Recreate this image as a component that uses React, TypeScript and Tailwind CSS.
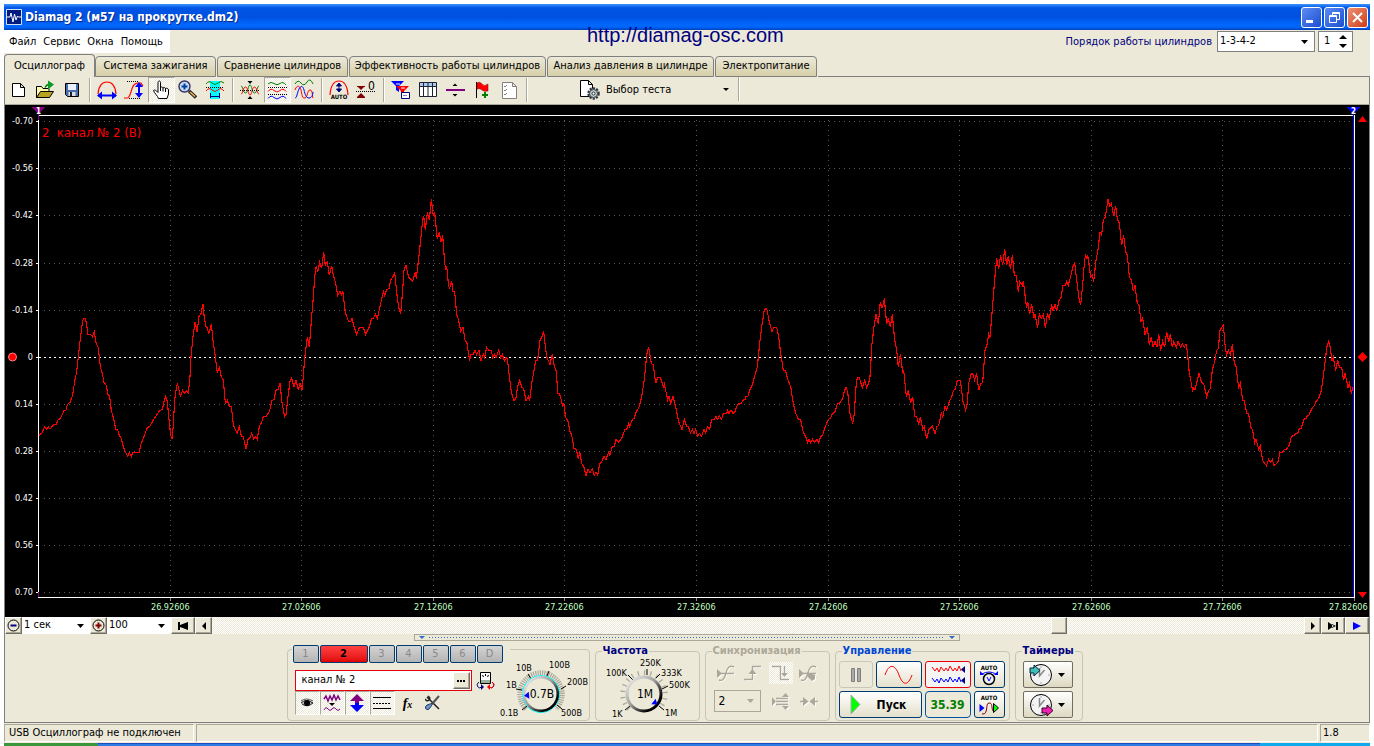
import { useState } from 'react';
import type { ReactNode } from 'react';
import clsx from 'clsx';

const tabs = [
  { name: 'Осциллограф', width: 'w-[91px]' },
  { name: 'Система зажигания', width: 'w-[121px]' },
  { name: 'Сравнение цилиндров', width: 'w-[131px]' },
  { name: 'Эффективность работы цилиндров', width: 'w-[197px]' },
  { name: 'Анализ давления в цилиндре', width: 'w-[167px]' },
  { name: 'Электропитание', width: 'w-[102px]' },
];

const levels = ['-0.70', '-0.56', '-0.42', '-0.28', '-0.14', '0', '0.14', '0.28', '0.42', '0.56', '0.70'];
const levelY = [121, 168, 215, 263, 310, 357, 404, 451, 498, 545, 592];
const times = ['26.92606', '27.02606', '27.12606', '27.22606', '27.32606', '27.42606', '27.52606', '27.62606', '27.72606', '27.82606'];
const timeX = [170, 301, 433, 564, 696, 828, 959, 1091, 1222, 1354];

const blocks = [
  {
    start: 0,
    points:
      '117,768 121,762 127,758 133,741 139,747 145,741 150,747 156,740 162,732 168,735 174,720 180,716 186,705 192,692 198,690 201,678 205,670 210,668 218,645 224,605 230,575 236,520 241,475 247,430 250,415 256,415 260,435 264,463 272,463 277,470 283,455 288,488 295,503 301,560 307,580 312,607 318,615 324,643 329,650 334,692 341,715 347,748 353,750 358,766 364,775 370,800 376,815 383,829 388,818 394,829 398,817 418,817 422,795 432,770 441,745 450,738 460,720 470,705 479,692 487,688 492,665 497,650 502,665 507,718 512,765 516,778 520,735 524,660 529,625 532,610 537,630 541,648 548,631 554,640 559,632 565,640 570,590 573,530 579,470 585,425 591,455 597,410 603,400 609,372 613,415 618,440 622,442 626,463 634,433 640,490 646,530 652,578 658,563 664,590 670,600 676,670 682,662 688,680 694,680 700,733 706,750 712,758 718,740 724,768 730,770 738,808 744,778 750,772 755,760 761,777 767,770 772,778 778,738 784,730 790,709 798,709 808,695 816,662 822,658 828,631 834,628 840,610 846,668 854,710 858,705 864,650 870,605 875,593 882,622 888,600 895,630 900,610 906,630 910,590 914,535 922,472 928,502 935,410 941,340 944,290 949,257 953,277 959,247 965,265 971,217 976,255 982,247 988,286 995,257 1001,290 1007,310 1013,346 1020,333 1025,345 1029,335 1034,385 1038,403 1046,425 1052,425 1056,415 1062,440 1070,464 1078,442 1090,442 1097,463 1108,440 1115,415 1120,415 1126,403 1132,415 1140,380 1150,335 1154,346 1160,330 1167,325 1173,298 1178,292 1184,277 1191,345 1196,383 1202,403 1208,330 1212,270 1218,256 1226,292 1238,304 1246,277 1249,296 1256,235 1262,180 1268,120 1271,108 1276,150 1282,97 1288,120 1294,58 1300,108 1304,97 1312,178 1318,157 1323,187 1328,166',
  },
  {
    start: 1320,
    points:
      '8,166 14,250 17,265 20,257 26,320 29,325 35,304 39,334 44,335 50,403 56,420 62,455 69,442 75,480 81,490 89,543 92,523 100,522 105,511 110,524 117,511 123,543 130,522 134,533 140,502 147,511 154,512 158,532 163,523 168,533 176,511 182,532 187,523 193,542 198,533 202,535 208,590 214,635 221,662 227,658 233,620 239,601 246,623 251,625 258,662 265,650 269,662 276,605 282,572 287,542 293,540 300,480 306,470 311,453 316,500 320,530 330,553 337,522 343,560 348,570 354,640 358,640 364,660 368,680 371,670 377,713 383,720 390,755 395,765 402,805 409,808 415,838 419,815 425,850 432,862 438,887 444,868 450,878 457,867 463,886 468,877 473,886 479,852 485,845 492,829 498,838 506,817 509,829 516,802 523,798 528,778 535,787 545,775 555,748 560,748 566,730 569,740 577,718 582,716 590,692 596,685 604,655 613,600 620,525 626,502 634,550 640,555 647,610 653,592 661,592 670,620 673,612 683,660 687,650 692,670 699,650 708,685 716,725 726,748 733,718 740,740 745,739 751,760 757,748 762,760 767,748 773,768 778,760 785,768 792,748 797,760 802,740 809,748 815,718 822,718 828,710 833,718 838,708 845,718 850,700 860,700 863,691 867,700 873,690 879,700 885,694 893,673 903,670 910,660 915,658 918,649 924,648 930,628 938,612 945,585 952,560 958,500 965,440 973,390 980,385 988,425 996,455 1001,442 1010,442 1016,470 1022,520 1030,570 1037,573 1044,600 1052,620 1060,670 1067,700 1075,717 1082,720 1090,757 1097,770 1103,788 1107,778 1112,788 1118,778 1124,788 1131,778 1136,788 1142,770 1148,766 1155,742 1165,718 1171,715 1178,700 1184,698 1192,672 1199,669 1208,655 1214,630 1218,622 1223,635 1230,700 1238,731 1243,700 1248,620 1252,592 1258,593 1267,623 1274,601 1280,622 1286,610 1290,590 1296,490 1302,440 1308,403 1315,433 1321,365 1327,385 1333,355 1340,433 1345,415 1351,442 1357,403 1364,480 1370,510 1375,562 1381,523',
  },
  {
    start: 2700,
    points:
      '1,523 4,540 8,580 11,570 19,650 25,631 32,670 38,650 44,708 50,710 56,731 61,710 68,748 73,740 80,778 87,748 97,738 105,760 111,740 116,737 124,700 128,710 135,680 140,690 148,665 155,650 160,632 166,627 172,601 181,601 189,665 197,691 202,670 206,610 214,580 218,580 224,601 230,580 236,631 242,612 248,608 255,510 261,495 266,462 270,472 276,400 284,300 290,235 296,266 302,226 308,256 314,208 320,256 325,227 331,266 337,226 343,285 349,288 355,335 359,304 367,316 370,304 380,385 383,365 389,403 395,373 402,415 405,403 413,443 418,403 424,415 430,403 436,443 442,403 448,415 455,373 459,394 465,373 470,394 477,362 483,352 489,316 496,316 500,304 505,316 512,290 518,262 524,247 530,300 537,355 542,375 548,315 554,237 557,227 561,237 563,226 572,290 577,286 581,305 588,240 594,210 600,157 605,165 610,120 616,112 624,58 629,78 634,70 641,108 647,79 652,118 658,130 665,196 671,166 677,215 682,225 688,290 694,300 700,334 705,316 712,370 717,375 723,425 728,415 735,464 742,442 748,494 754,472 759,502 765,484 771,502 776,462 782,512 788,484 794,502 800,455 806,485 811,463 817,502 821,485 829,502 834,484 842,502 847,492 853,502 858,493 862,515 868,580 878,632 881,625 885,630 897,580 904,605 912,615 920,650 926,632 931,625 937,570 943,548 950,512 955,505 960,450 967,440 970,433 976,505 980,524 985,511 991,524 997,493 1003,550 1008,560 1016,622 1021,610 1028,660 1033,662 1040,700 1046,702 1052,740 1058,750 1064,788 1068,778 1076,808 1081,798 1088,842 1099,857 1106,838 1111,848 1117,838 1122,857 1128,852 1134,845 1140,817 1148,816 1153,808 1160,807 1168,795 1174,770 1182,766 1188,760 1193,760 1197,748 1203,745 1212,718 1218,715 1221,709 1227,705 1236,685 1242,678 1248,665 1256,655 1263,635 1270,590 1277,530 1281,500 1286,484 1290,500 1296,542 1300,532 1307,572 1313,541 1318,561 1325,562 1331,601 1335,580 1344,622 1348,610 1354,641 1358,622',
  },
];

const checker =
  'bg-[conic-gradient(#fff_25%,#ece9d8_0_50%,#fff_0_75%,#ece9d8_0)] bg-[length:2px_2px]';
const raised =
  'border border-t-white border-l-white border-r-[#716f64] border-b-[#716f64] shadow-[inset_-1px_-1px_0_#aca899] bg-[#ece9d8]';
const sunken = 'border border-t-[#aca899] border-l-[#aca899] border-r-white border-b-white';

/* ---------- Toolbar ---------- */

const toolIcons: Record<string, ReactNode> = {
  new: <path d="M6.500 5.500h8l4 4v9h-12zM14.500 5.500v4h4" fill="#fff" stroke="#000" />,
  open: (
    <>
      <path d="M3.500 19.500v-11h5l1.500 2h6v9z" fill="#ffffb0" stroke="#000" />
      <path d="M3.500 19.500l4-6h13l-4 6z" fill="#b8a020" stroke="#000" />
      <path d="M12 9.500q2-3.500 4-3" fill="none" stroke="#008000" strokeWidth="1.500" />
      <path d="M15 2.500v9l6-5z" fill="#0a9a2a" />
    </>
  ),
  save: (
    <>
      <path d="M5.500 5.500h13v13h-11l-2-2z" fill="#4a6ea9" stroke="#000" />
      <path d="M8 6h8v6H8z" fill="#e8f0ff" />
      <path d="M8.500 14h7v4h-7z" fill="#ddd" />
      <path d="M10 14h2v4h-2z" fill="#123" />
    </>
  ),
  period: (
    <>
      <path d="M3 16q1-12 9-12t9 12" fill="none" stroke="red" strokeWidth="1.200" />
      <path d="M3 17.500h18" stroke="#00f" strokeWidth="2" />
      <path d="M7 13.500v8l-5-4zM17 13.500v8l5-4z" fill="#00f" />
    </>
  ),
  amplitude: (
    <>
      <path d="M2 20h3c5 0 3-15 11-15h3l2 3" fill="none" stroke="red" strokeWidth="1.200" />
      <path d="M5 3.500h12M7 20.500h12" stroke="#000" strokeDasharray="1 1" />
      <path d="M17 6v12" stroke="#00f" strokeWidth="2" />
      <path d="M13 9h8l-4-5zM13 15h8l-4 5z" fill="#00f" />
    </>
  ),
  hand: (
    <path
      d="M9.500 20.500c-1-3-4-5-5-8 1-1 2.500-.5 4.500 2V4.500c0-2 2.500-2 2.500 0V10c0-1.500 2.500-1.500 2.500.5 0-1.500 2.500-1.500 2.500.5 0-1.300 3-1 3 1v4l-1.500 4.500zM11.500 9v4M14 10.500v3M16.500 11v3"
      fill="#fff"
      stroke="#000"
    />
  ),
  zoom: (
    <>
      <circle cx="8.500" cy="8.500" r="5.500" fill="#c8dcf4" stroke="#336" strokeWidth="1.400" />
      <path d="M8.500 5.500v6M5.500 8.500h6" stroke="#0040a0" strokeWidth="2" />
      <path d="M13 13l7 6.500" stroke="#222" strokeWidth="3.500" />
      <path d="M14 14l5 4.500" stroke="#f0b850" strokeWidth="1.500" />
    </>
  ),
  cursor: (
    <>
      <path d="M7 3h10v18H7z" fill="#0ff" />
      <path d="M3 6q3-4 6-1t6 0 6 0" fill="none" stroke="#008000" />
      <path d="M3 13q3-4 6-1t6 0 6 1" fill="none" stroke="red" />
      <path d="M3 9.500h18" stroke="#000" strokeDasharray="1 1" />
      <path d="M7.500 15v5M16.500 15v5M8 18.500h8" stroke="#000080" />
    </>
  ),
  cross: (
    <>
      <path d="M3 8C5 8 5 15 7.500 15S10 7 12 7s2 8 4.500 8S19 8 21 8" fill="none" stroke="#008000" />
      <path d="M3 16c2 0 2-7 4.500-7S10 17 12 17s2-8 4.500-8S19 16 21 16" fill="none" stroke="red" />
      <path d="M2 12.500h20" stroke="#000" strokeDasharray="1 1" />
      <path d="M9.500 3h5L12 6zM9.500 21h5L12 18z" fill="#000" />
    </>
  ),
  split: (
    <>
      <path d="M3 6q3-3 6-.5t6 0 6 1.500" fill="none" stroke="#008000" />
      <path d="M3 13.500q3-4 6-1t6 0 6 1" fill="none" stroke="red" />
      <path d="M3 20.500q3-4 6-1t6 0 6 1" fill="none" stroke="#00f" />
      <path d="M3 9.500h19M3 16.500h19" stroke="#000" strokeDasharray="1 1" />
    </>
  ),
  overlay: (
    <>
      <path d="M3 6q3-5 6-1t6-1 6 2" fill="none" stroke="#008000" />
      <path d="M3 12c2-6 5-4 6 0s1 9 4 8 2-8 5-8 2 6 3 8" fill="none" stroke="red" />
      <path d="M3 20c2 0 2-5 4-9s4-3 5 1 2 8 5 8 4-4 4-6" fill="none" stroke="#00f" />
    </>
  ),
  auto: (
    <>
      <path d="M3 17q1-14 9-14t9 14" fill="none" stroke="red" strokeWidth="1.200" />
      <path d="M12 5v8M9.500 8L12 5l2.500 3zM9.500 11l2.500 3 2.500-3z" fill="#000080" stroke="#000080" />
      <text x="12" y="21" fontSize="6" fontWeight="bold" textAnchor="middle">AUTO</text>
    </>
  ),
  zero: (
    <>
      <path d="M3 8h8l-4 4zM3 19h8l-4-4z" fill="#800000" />
      <path d="M3 8.500h8M3 19.500h8" stroke="#800000" />
      <path d="M2 13.500h20" stroke="#000" strokeDasharray="1 1" />
      <text x="14" y="12" fontSize="12">0</text>
    </>
  ),
  filter: (
    <>
      <path d="M2 3h13l-5 5v6l-3-2V8z" fill="#00f" />
      <path d="M7 8h13l-5 5v6l-3-2v-4z" fill="red" />
      <path d="M7 6h4M12 10h4" stroke="#fff" />
      <path d="M12.500 14.500h8v6h-8z" fill="#fff" stroke="#000080" />
      <path d="M14.500 17.500h4" stroke="#000080" strokeDasharray="1 1" />
    </>
  ),
  table: (
    <>
      <path d="M3.500 4.500h17v14h-17z" fill="#fff" stroke="#223" />
      <path d="M4 5h16v3H4z" fill="#a8c8f0" />
      <path d="M3 8.500h18M7.500 5v13M12 5v13M16.500 5v13" stroke="#223" />
    </>
  ),
  line: (
    <>
      <path d="M3 12h19" stroke="#800080" strokeWidth="2" />
      <path d="M9.500 8h5L12 5.500zM9.500 16h5L12 18.500z" fill="#000" />
    </>
  ),
  flag: (
    <>
      <path d="M6.500 4v16" stroke="#000" />
      <path d="M7 5q3-2 5 1t6 0v7q-4 1-6-1t-5-1z" fill="red" stroke="#800000" strokeWidth=".5" />
      <path d="M12 17h6M15 14v6" stroke="#008000" strokeWidth="2" />
    </>
  ),
  list: (
    <>
      <path d="M5.500 4.500h10l4 4v12h-14zM15.500 4.500v4h4" fill="#fff" stroke="#808080" />
      <path d="M7 8l1 1 2-2M7 12l1 1 2-2M7 16l1 1 2-2" fill="none" stroke="#808080" />
    </>
  ),
};

const toolGroups = [
  [['new', 'Новый'], ['open', 'Открыть'], ['save', 'Сохранить']],
  [['period', 'Период'], ['amplitude', 'Амплитуда'], ['hand', 'Рука'], ['zoom', 'Масштаб'], ['cursor', 'Интервал']],
  [['cross', 'Совместить'], ['split', 'Разделить'], ['overlay', 'Наложить']],
  [['auto', 'Авто'], ['zero', 'Ноль']],
  [['filter', 'Фильтр'], ['table', 'Таблица'], ['line', 'Линия'], ['flag', 'Метка'], ['list', 'Список']],
];

function Separator() {
  return (
    <div className="flex w-2 justify-center">
      <div className="h-6 w-[2px] border-l border-[#aca899] bg-white" />
    </div>
  );
}

function Toolbar() {
  const [pressed, setPressed] = useState(['hand', 'split']);
  const toggle = (id: string) =>
    setPressed(pressed.includes(id) ? pressed.filter((p) => p !== id) : [...pressed, id]);

  return (
    <div className="flex h-[27px] shrink-0 items-start border-x border-[#808080] text-[11px]">
      {toolGroups.map((group, i) => (
        <div key={i} className="flex items-center">
          {group.map(([id, label]) => (
            <button
              key={id}
              aria-label={label}
              onClick={() => toggle(id)}
              className={clsx(
                'flex h-[26px] w-[27px] items-center border',
                pressed.includes(id) ? [checker, sunken] : 'border-transparent'
              )}
            >
              <svg viewBox="0 0 24 24" className="h-6 w-6 shrink-0">{toolIcons[id]}</svg>
            </button>
          ))}
          <Separator />
        </div>
      ))}
      <button className="ml-[47px] flex h-[26px] w-[157px] items-center gap-1">
        <svg viewBox="0 0 24 22" className="h-[22px] w-6">
          <path d="M2.500 1.500h8l4 4v12h-12zM10.500 1.500v4h4" fill="#fff" stroke="#000" />
          <circle cx="15.500" cy="14.500" r="5" fill="#a8c8b8" stroke="#334" strokeWidth="2.500" strokeDasharray="2 1.200" />
          <circle cx="15.500" cy="14.500" r="4" fill="#b8d0c4" stroke="#445" />
          <circle cx="15.500" cy="14.500" r="1.500" fill="#fff" stroke="#334" />
        </svg>
        <span className="flex-1 text-left">Выбор теста</span>
        <svg viewBox="0 0 6 4" className="mr-[6px] h-1 w-[6px]"><path d="M0 0h6L3 3z" /></svg>
      </button>
      <Separator />
    </div>
  );
}

/* ---------- Chart ---------- */

function Chart() {
  return (
    <svg
      viewBox="5 105 1364 512"
      className="block min-h-0 w-full flex-1 bg-black"
      shapeRendering="crispEdges"
      role="img"
      aria-label="Осциллограмма"
    >
      {levelY.map((y, i) => (
        <g key={y}>
          {i !== 5 && <path d={`M44 ${y + 0.5}H1352`} stroke="#585858" strokeDasharray="1 4" />}
          <path d={`M36 ${y + 0.5}h3`} stroke="#fff" />
          <text x="33" y={y + 3} fontSize="9" fill="#fff" textAnchor="end">{levels[i]}</text>
        </g>
      ))}
      {timeX.map((x, i) => (
        <g key={x}>
          {i < 9 && <path d={`M${x + 0.5} 120V592`} stroke="#585858" strokeDasharray="1 4" />}
          <path d={`M${x + 0.5} 598v3`} stroke="#888" />
          <text x={Math.min(x - 19, 1329)} y="610" fontSize="9" fill="#c0ffc0">{times[i]}</text>
        </g>
      ))}
      <path d="M39 357.500H1354" stroke="#fff" strokeDasharray="2 3" />
      <path d="M1354.500 115.500H38.500V597.500H1354.500z" fill="none" stroke="#fff" />
      <path d="M1353.500 111V597" stroke="#00f" />
      <path d="M38.500 112v8M38.500 592v5" stroke="#800080" />
      <text x="42" y="137" fontSize="13" fill="red" xmlSpace="preserve">2  канал № 2 (В)</text>
      {blocks.map((block) => (
        <g key={block.start} transform={`translate(${block.start / 3} 180) scale(${1 / 3})`}>
          <polyline points={block.points} fill="none" stroke="red" strokeWidth="3.400" />
        </g>
      ))}
      <path d="M31 107h15l-7.500 7z" fill="#800080" />
      <text x="38.500" y="114" fontSize="8" fontWeight="bold" fill="#fff" textAnchor="middle">1</text>
      <path d="M1346 107h15l-7.500 7z" fill="#00f" />
      <text x="1353.500" y="114" fontSize="8" fontWeight="bold" fill="#fff" textAnchor="middle">2</text>
      <g shapeRendering="auto">
        <circle cx="12.500" cy="357" r="4" fill="red" stroke="#ff8080" />
        <path d="M1358 122h9l-4.500-6zM1358 592h9l-4.500 6zM1362.500 352l5 5-5 5-5-5z" fill="red" />
      </g>
    </svg>
  );
}

/* ---------- Scroll row ---------- */

function ArrowSelect({ label, value, className }: { label: string; value: string; className: string }) {
  return (
    <div className={clsx('relative bg-white', className)}>
      <select aria-label={label} className="h-full w-full appearance-none bg-transparent pl-[2px] outline-none">
        <option>{value}</option>
      </select>
      <svg viewBox="0 0 7 4" className="pointer-events-none absolute top-1/2 right-[6px] -mt-[2px] h-1 w-[7px]">
        <path d="M0 0h7L3.500 4z" />
      </svg>
    </div>
  );
}

function ScrollRow() {
  return (
    <div className="flex h-[17px] shrink-0 text-[11px]">
      <button aria-label="Уменьшить" className={clsx('flex w-[17px] items-center justify-center', raised)}>
        <svg viewBox="0 0 13 13" className="h-[13px] w-[13px] shrink-0">
          <circle cx="6.500" cy="6.500" r="5.500" fill="none" stroke="#000" />
          <path d="M3.500 6.500h6" stroke="#000080" strokeWidth="2" />
        </svg>
      </button>
      <ArrowSelect label="Развёртка" value="1 сек" className="w-[68px]" />
      <button aria-label="Увеличить" className={clsx('flex w-[17px] items-center justify-center', raised)}>
        <svg viewBox="0 0 13 13" className="h-[13px] w-[13px] shrink-0">
          <circle cx="6.500" cy="6.500" r="5.500" fill="none" stroke="#000" />
          <path d="M3.500 6.500h6M6.500 3.500v6" stroke="#800000" strokeWidth="2" />
        </svg>
      </button>
      <ArrowSelect label="Масштаб" value="100" className="w-16" />
      <button aria-label="В начало" className={clsx('flex w-6 items-center justify-center', raised)}>
        <svg viewBox="0 0 10 8" className="h-2 w-[10px]"><path d="M0 0h2v3l8-3v8L2 5v3H0z" /></svg>
      </button>
      <button aria-label="Назад" className={clsx('flex w-[17px] items-center justify-center', raised)}>
        <svg viewBox="0 0 4 8" className="h-2 w-1"><path d="M4 0v8L0 4z" /></svg>
      </button>
      <div className={clsx('flex flex-1 justify-end', checker)}>
        <div className={clsx('mr-[237px] w-4', raised)} />
      </div>
      <button aria-label="Вперёд" className={clsx('flex w-[17px] items-center justify-center', raised)}>
        <svg viewBox="0 0 4 8" className="h-2 w-1"><path d="M0 0v8l4-4z" /></svg>
      </button>
      <button aria-label="В конец" className={clsx('flex w-6 items-center justify-center', raised)}>
        <svg viewBox="0 0 10 8" className="h-2 w-[10px]"><path d="M0 0v8l6-4zM8 0h2v8H8zM4 2l4 2-4 2z" /></svg>
      </button>
      <button aria-label="Пуск прокрутки" className={clsx('flex w-6 items-center justify-center', raised)}>
        <svg viewBox="0 0 8 8" className="h-2 w-2"><path d="M0 0v8l8-4z" fill="#00f" /></svg>
      </button>
    </div>
  );
}

/* ---------- Bottom panels ---------- */

interface Dial {
  cx: number;
  cy: number;
  value: string;
  ring: string;
  angle: number;
  viewBox: string;
  labels: [number, number, string][];
  marks: string;
  ticks: string;
  id: string;
}

function Knob({ cx, cy, value, ring, angle, viewBox, labels, marks, ticks, id }: Dial) {
  return (
    <svg viewBox={viewBox} className="h-[66px] w-[92px]" role="img" aria-label={value}>
      <defs>
        <linearGradient id={id} x1="0" y1="0" x2="1" y2="1">
          <stop offset="0" stopColor="#f4f4f4" />
          <stop offset=".45" stopColor="#a0a0a0" />
          <stop offset=".8" stopColor="#000" />
        </linearGradient>
      </defs>
      <path
        d={`M${cx - 15} ${cy + 15}A21.200 21.200 0 1 1 ${cx + 15} ${cy + 15}`}
        fill="none"
        stroke="#aca899"
        strokeWidth="5"
        strokeDasharray={ticks}
      />
      <path d={marks} stroke="#000" />
      <circle cx={cx} cy={cy} r="17" fill="#ece9d8" stroke={`url(#${id})`} strokeWidth="3" />
      <circle cx={cx} cy={cy} r="18.500" fill="none" stroke={ring} strokeDasharray="5 1" />
      <path d="M-17 0l5-3.500v7z" fill="#00f" transform={`translate(${cx} ${cy}) rotate(${angle})`} />
      <text x={cx + 1} y={cy + 4} fontSize="12" textAnchor="middle">{value}</text>
      {labels.map(([x, y, text]) => (
        <text key={text} x={x} y={y} fontSize="9">{text}</text>
      ))}
    </svg>
  );
}

function Group({ title, color, className, children }: { title: string; color: string; className: string; children: ReactNode }) {
  return (
    <fieldset className={clsx('h-[78px] min-w-0 rounded-[4px] border border-[#c8c5b4]', className)}>
      <legend className={clsx('ml-[6px] h-4 px-px text-[11px] leading-4 font-bold', color)}>{title}</legend>
      {children}
    </fieldset>
  );
}

function ChannelPanel() {
  const [channel, setChannel] = useState('2');
  const [name, setName] = useState('канал № 2');

  return (
    <div className="mt-[6px] flex h-[72px] w-[303px] rounded-[4px] border border-[#c8c5b4]">
      <div className="flex flex-col pl-1">
        <div className="-mt-[5px] flex h-[19px] gap-px bg-[#ece9d8] pr-[7px] pl-px">
          {['1', '2', '3', '4', '5', '6', 'D'].map((c) => (
            <button
              key={c}
              onClick={() => setChannel(c)}
              className={clsx(
                'h-[18px] rounded-[2px] border border-[#003c74] text-[11px] leading-4',
                c === channel
                  ? 'w-12 bg-linear-to-b from-[#ff4040] to-[#e00000] font-bold text-black'
                  : 'w-[26px] bg-linear-to-b from-[#d4d4d4] to-[#b4b4b4] text-[#888]'
              )}
            >
              {c}
            </button>
          ))}
        </div>
        <div className="mt-[6px] ml-[3px] flex items-center gap-1">
          <div className="flex h-[21px] w-[177px] border border-red-600 bg-white p-px">
            <input
              aria-label="Имя канала"
              value={name}
              onChange={(e) => setName(e.target.value)}
              className="min-w-0 flex-1 pl-[5px] text-[11px] outline-none"
            />
            <button aria-label="Выбрать" className={clsx('flex w-[17px] items-center justify-center', raised)}>
              <svg viewBox="0 0 8 2" className="h-[2px] w-2"><path d="M0 0h2v2H0zM3 0h2v2H3zM6 0h2v2H6z" /></svg>
            </button>
          </div>
          <button aria-label="Прибор">
            <svg viewBox="0 0 20 20" className="h-5 w-5">
              <path d="M4.500 1.500h10v11h-10z" fill="#fff" stroke="#000" />
              <path d="M5 9h9v3H5z" fill="#9ab09a" />
              <path d="M6.500 4l1 2M12.500 4l-1 2M9.500 3v2" stroke="#000" />
              <path d="M3 11q-3 2-1.500 4.500T6 16M16 11q3 2 1.500 4.500T13 16" fill="none" stroke="#000080" />
              <path d="M16 11q3 2 1.500 4.500T13 16" fill="none" stroke="red" />
              <path d="M5 13v6l3-3z" fill="#000080" />
              <path d="M14 13v6l-3-3z" fill="red" />
            </svg>
          </button>
        </div>
        <div className="ml-[3px] flex h-6 items-center">
          <button aria-label="Показать" className={clsx('flex h-6 w-[25px] items-center justify-center', checker, sunken)}>
            <svg viewBox="0 0 16 12" className="h-3 w-4">
              <path d="M2 6q5-5 12 0-6 5-11 1" fill="#bbb" stroke="#222" />
              <circle cx="8" cy="6" r="3" />
              <path d="M2 4q5-4 12 0" stroke="#555" fill="none" />
            </svg>
          </button>
          <button aria-label="Сглаживание" className={clsx('flex h-6 w-[25px] items-center justify-center', checker, sunken)}>
            <svg viewBox="0 0 18 18" className="h-[18px] w-[18px] shrink-0">
              <path d="M1 5l2-3 2 5 2-5 2 4 2-5 2 5 2-4 2 4" fill="none" stroke="#800080" strokeWidth="1.500" />
              <path d="M6 9h6l-3 3z" />
              <path d="M1 16q2-4 4-1t4 0 4 0 4 0" fill="none" stroke="#800080" />
            </svg>
          </button>
          <button aria-label="Смещение" className={clsx('flex h-6 w-[25px] items-center justify-center', checker, sunken)}>
            <svg viewBox="0 0 16 18" className="h-[18px] w-4 shrink-0">
              <path d="M8 0l7 7h-5v2H6V7H1z" fill="#800080" />
              <path d="M8 18l7-7h-5V9H6v2H1z" fill="#00f" />
            </svg>
          </button>
          <button aria-label="Уровень" className={clsx('flex h-6 w-[25px] items-center justify-center', checker, sunken)}>
            <svg viewBox="0 0 18 14" className="h-[14px] w-[18px] shrink-0">
              <path d="M0 1.500h18M0 12.500h18" stroke="#000" />
              <path d="M0 7.500h18" stroke="#000" strokeDasharray="2 1" />
            </svg>
          </button>
          <button className="h-6 w-[26px] font-['Liberation_Serif',serif] text-[14px] font-bold italic">
            f<span className="text-[10px]">x</span>
          </button>
          <button aria-label="Настройки" className="flex h-6 w-6 items-center justify-center">
            <svg viewBox="0 0 16 16" className="h-4 w-4">
              <path d="M2 2l12 12M3 1q3 2 1 4t-4-1" fill="none" stroke="#222" strokeWidth="1.500" />
              <path d="M14 1l-7 8" stroke="#555" strokeWidth="2" />
              <path d="M8 8l-3 5q-2 3-4 1t1-4z" fill="#6a94c8" stroke="#246" />
            </svg>
          </button>
        </div>
      </div>
      <div className="-ml-3 pt-[3px]">
        <Knob
          id="volt"
          cx={541}
          cy={694}
          value="0.7В"
          ring="#0ff"
          ticks="1.200 1"
          angle={-6}
          viewBox="498 653 92 66"
          labels={[[500, 716, '0.1В'], [506, 688, '1В'], [516, 671, '10В'], [549, 668, '100В'], [567, 685, '200В'], [561, 716, '500В']]}
          marks="M522 710l5-4M516 689l6 1M528 674l3 5M549 671l-2 5M566 686l-5 3M562 709l-5-4"
        />
      </div>
    </div>
  );
}

const xpButton =
  'flex h-[27px] items-center justify-center rounded-[3px] border border-[#003c74] bg-linear-to-b from-white to-[#e4e0cc]';

function Miniwave({ color }: { color: string }) {
  return (
    <svg viewBox="0 0 34 9" className="h-[9px] w-[34px]">
      <path d="M1 2l3 4 2-3 2 4 2-5 3 4 2-3 2 3 2-5 3 5 2-3 2 3 2-5 2 5" fill="none" stroke={color} />
      <path d="M34 1v7l-4-3.500z" fill="#000080" />
    </svg>
  );
}

function Clock({ out }: { out?: boolean }) {
  return (
    <svg viewBox="0 0 26 26" className="h-[26px] w-[26px] shrink-0">
      <circle cx="13" cy="13" r="10.500" fill="#f4f4f4" stroke="#000" />
      <path d="M11.500 6v8l5-6" fill="none" stroke="#888" strokeWidth="1.500" />
      <path d="M13 4v2M13 20v2M4 13h2M20 13h2" stroke="#aaa" />
      {out ? (
        <path d="M14 16h5v-3l6 5.500-6 5.500v-3h-5z" fill="#f020b0" stroke="#300020" />
      ) : (
        <path d="M2 6h4V3l6 5.500L6 14v-3H2z" fill="#40c0b0" stroke="#024" />
      )}
    </svg>
  );
}

function SyncIcon({ d, tri, label, on }: { d: string; tri: string; label: string; on?: boolean }) {
  return (
    <button disabled aria-label={label} className={clsx('flex h-[22px] w-6 items-center justify-center', on && checker)}>
      <svg viewBox="0 0 20 18" className="h-[18px] w-5 shrink-0">
        <g transform="translate(1 1)">
          <path d={d} fill="none" stroke="#fff" />
          <path d={tri} fill="#fff" />
        </g>
        <path d={d} fill="none" stroke="#aca899" strokeWidth="1.400" />
        <path d={tri} fill="#aca899" />
      </svg>
    </button>
  );
}

function BottomPanel() {
  return (
    <div className="flex h-[82px] shrink-0 items-start justify-center gap-[5px] border-x border-b border-[#808080] pt-[2px] pr-[5px]">
      <ChannelPanel />

      <Group title="Частота" color="text-[#000080]" className="w-[105px]">
        <div className="-mt-1 flex justify-center">
          <Knob
            id="freq"
            cx={645}
            cy={694}
            value="1M"
            ring="none"
            ticks="1.200 5"
            angle={218}
            viewBox="602 655 92 66"
            labels={[[613, 717, '1K'], [607, 676, '100K'], [641, 666, '250K'], [662, 676, '333K'], [670, 688, '500K'], [666, 716, '1M']]}
            marks="M626 710l5-4M629 675l5 5M648 669v6M661 674l-4 4M669 686l-6 3M665 710l-5-4"
          />
        </div>
      </Group>

      <Group title="Синхронизация" color="text-[#aca899]" className="w-[125px]">
        <div className="flex justify-between px-2 pt-[3px]">
          <SyncIcon label="Уровень" d="M3 16q5 2 7-7t8-6M5 9.500h13" tri="M1 5v9l5-4.500z" />
          <SyncIcon label="Фронт" d="M1 15.500h8.500v-13H18" tri="M5.500 10h8l-4-5z" />
          <SyncIcon label="Спад" on d="M1 2.500h8.500v13H18M13.500 2v9" tri="M10 9h7l-3.500 4z" />
          <SyncIcon label="Вручную" d="M3 16q5 2 7-7t8-6M5 9.500h13" tri="M1 5v9l5-4.500zM9 8l8 3v4l-3 2-4-4z" />
        </div>
        <div className="flex items-center justify-between px-2 pt-[6px]">
          <div className="relative">
            <select
              disabled
              aria-label="Канал синхронизации"
              className="block h-[22px] w-[47px] appearance-none border border-[#aca899] pl-1 text-[12px] text-black opacity-100"
            >
              <option>2</option>
            </select>
            <svg viewBox="0 0 7 4" className="pointer-events-none absolute top-[9px] right-[7px] h-1 w-[7px]">
              <path d="M0 0h7L3.500 4z" fill="#aca899" />
            </svg>
          </div>
          <div className="flex gap-1">
            <SyncIcon label="Гистерезис" d="M5 6.500h12M5 9.500h12M5 12.500h12" tri="M1 5v9l4-4.500zM11 5h7l-3.500-4zM11 14h7l-3.500 4z" />
            <SyncIcon label="Сжать" d="M1 9.500h5M14 9.500h5" tri="M4 5v9l5.500-4.500zM16 5v9l-5.500-4.500z" />
          </div>
        </div>
      </Group>

      <Group title="Управление" color="text-[#0046d5]" className="w-[175px]">
        <div className="flex gap-[3px] pt-[2px] pl-[3px]">
          <div className="flex flex-col gap-[3px]">
            <div className="flex gap-[3px]">
              <button disabled aria-label="Пауза" className="flex h-[27px] w-[34px] items-center justify-center rounded-[3px] border border-[#c9c7ba]">
                <svg viewBox="0 0 12 16" className="h-4 w-3">
                  <path d="M1.500 1.500h3v13h-3zM7.500 1.500h3v13h-3z" fill="#aaa" stroke="#808080" />
                </svg>
              </button>
              <button aria-label="Сигнал" className={clsx('w-[46px]', xpButton)}>
                <svg viewBox="0 0 30 20" className="h-5 w-[30px]">
                  <path d="M1 10C5-2 11-1 15 10s9 11 13 0" fill="none" stroke="red" />
                </svg>
              </button>
            </div>
            <button className={clsx('w-[83px] gap-4 pr-1 text-[12px] font-bold', xpButton)}>
              <svg viewBox="0 0 11 20" className="h-5 w-[11px]">
                <path d="M1 0v19l9-9.500z" fill="#0f0" stroke="#aaa" />
              </svg>
              Пуск
            </button>
          </div>
          <div className="flex flex-col gap-[3px]">
            <button aria-label="Запись" className="flex h-[27px] w-[46px] flex-col items-center justify-center gap-[2px] rounded-[3px] border border-red-600 bg-[#f4f4f4]">
              <Miniwave color="red" />
              <Miniwave color="#00f" />
            </button>
            <output className="flex h-[27px] w-[46px] items-center justify-center rounded-[4px] border border-[#0054a6] text-[12px] font-bold text-[#008000]">
              35.39
            </output>
          </div>
          <div className="flex flex-col gap-[3px]">
            <button aria-label="Авто напряжение" className={clsx('w-[31px]', xpButton)}>
              <svg viewBox="0 0 22 24" className="h-6 w-[22px] shrink-0">
                <text x="11" y="7" fontSize="6" fontWeight="bold" textAnchor="middle">AUTO</text>
                <path d="M4 11q7-4 14 0" fill="none" stroke="#00f" />
                <path d="M2 8v4h4zM20 8v4h-4z" fill="#00f" />
                <circle cx="11" cy="16" r="5.500" fill="#eee" stroke="#000" strokeWidth="1.500" />
                <path d="M9 14l2 4 2-4" fill="none" stroke="#00f" />
              </svg>
            </button>
            <button aria-label="Авто запуск" className={clsx('w-[31px]', xpButton)}>
              <svg viewBox="0 0 22 24" className="h-6 w-[22px] shrink-0">
                <text x="11" y="7" fontSize="6" fontWeight="bold" textAnchor="middle">AUTO</text>
                <path d="M4 21c7 1 3-11 7-11s2 4 4 8" fill="none" stroke="#800000" />
                <path d="M1.500 11v8l5-4z" fill="#00f" />
                <path d="M15.500 10.500v9l5-4.500z" fill="#0f0" stroke="#000" />
              </svg>
            </button>
          </div>
        </div>
      </Group>

      <Group title="Таймеры" color="text-[#000080]" className="w-[68px]">
        <div className="flex flex-col gap-[3px] pt-[2px] pl-[7px]">
          {[false, true].map((out) => (
            <button
              key={String(out)}
              aria-label={out ? 'Таймер остановки' : 'Таймер запуска'}
              className="flex h-[27px] w-[50px] items-center gap-1 rounded-[2px] border border-[#716f64] bg-linear-to-b from-white to-[#dcd8c0] pl-1"
            >
              <Clock out={out} />
              <svg viewBox="0 0 7 4" className="h-1 w-[7px]"><path d="M0 0h7L3.500 4z" /></svg>
            </button>
          ))}
        </div>
      </Group>
    </div>
  );
}

export default function App() {
  const [activeTab, setActiveTab] = useState('Осциллограф');

  return (
    <div className="flex h-screen flex-col overflow-hidden bg-white px-1 pt-1 font-['DejaVu_Sans_Condensed','DejaVu_Sans',sans-serif] text-black">
      <div className="relative flex min-h-0 flex-1 flex-col bg-[#ece9d8]">
        {/* Title bar */}
        <header className="flex h-[26px] shrink-0 items-center gap-[3px] bg-[linear-gradient(#3c94ff_0,#0055e5_15%,#0050e0_50%,#0068ff_80%,#0062f5_90%,#0040b8_100%)] px-[2px]">
          <svg viewBox="0 0 16 16" className="h-4 w-4">
            <path d="M.5 .5h15v15H.5z" fill="#001c80" stroke="#d0e0ff" />
            <path d="M1 8h3l1-4 2 9 1.500-8 1.500 6 1.500-4 1 1h3" fill="none" stroke="#fff" />
          </svg>
          <h1 className="flex-1 text-[12px] font-bold text-white [text-shadow:1px_1px_0_#0a2a8a]">
            Diamag 2 (м57 на прокрутке.dm2)
          </h1>
          <div className="flex gap-[2px]">
            <button aria-label="Свернуть" className="h-[21px] w-[21px] rounded-[3px] border border-white bg-linear-to-br from-[#5c8cf4] to-[#1c4cd0]">
              <svg viewBox="0 0 19 19"><path d="M4 12h7v3H4z" fill="#fff" /></svg>
            </button>
            <button aria-label="Восстановить" className="h-[21px] w-[21px] rounded-[3px] border border-white bg-linear-to-br from-[#5c8cf4] to-[#1c4cd0]">
              <svg viewBox="0 0 19 19" fill="none" stroke="#fff">
                <path d="M4.500 7.500h7v7h-7zM4 8.500h8M7.500 7V4.500h7v7H12M7 5.500h8" />
              </svg>
            </button>
            <button aria-label="Закрыть" className="h-[21px] w-[21px] rounded-[3px] border border-white bg-linear-to-br from-[#f09070] to-[#cc3810]">
              <svg viewBox="0 0 19 19"><path d="M5 5l9 9M14 5l-9 9" stroke="#fff" strokeWidth="2" /></svg>
            </button>
          </div>
        </header>
        <a
          href="http://diamag-osc.com"
          className="absolute top-[19px] left-[583px] font-['Liberation_Sans',sans-serif] text-[20px] leading-6 text-[#000080]"
        >
          http://diamag-osc.com
        </a>

        {/* Menu */}
        <div className="flex h-6 shrink-0 items-start justify-between text-[11px]">
          <nav className="flex h-[23px] w-[166px] items-center gap-[7px] bg-white pt-[2px] pl-[5px]">
            {['Файл', 'Сервис', 'Окна', 'Помощь'].map((item) => (
              <button key={item}>{item}</button>
            ))}
          </nav>
          <div className="mr-[17px] flex items-center pt-px">
            <label htmlFor="order" className="mr-[5px] pt-px text-[#000080]">Порядок работы цилиндров</label>
            <div className="relative mr-[3px]">
              <select id="order" className="block h-[21px] w-[98px] appearance-none border border-[#808080] bg-white pl-[2px] outline-none">
                <option>1-3-4-2</option>
              </select>
              <svg viewBox="0 0 7 4" className="pointer-events-none absolute top-[9px] right-[7px] h-1 w-[7px]">
                <path d="M0 0h7L3.500 4z" />
              </svg>
            </div>
            <div className="flex h-[21px] w-[35px] items-center border border-[#808080] bg-white">
              <input aria-label="Номер цилиндра" defaultValue="1" className="w-5 pl-[5px] outline-none" />
              <svg viewBox="0 0 8 13" className="h-[13px] w-2"><path d="M0 4h8L4 0zM0 9h8l-4 4z" /></svg>
            </div>
          </div>
        </div>

        {/* Tabs */}
        <div role="tablist" className="flex h-[23px] shrink-0 items-end">
          {tabs.map((tab) => (
            <button
              key={tab.name}
              role="tab"
              aria-selected={tab.name === activeTab}
              onClick={() => setActiveTab(tab.name)}
              className={clsx(
                'mr-px rounded-t-[4px] border-x border-t border-[#808080] text-[11px] whitespace-nowrap',
                tab.width,
                tab.name === activeTab
                  ? 'mr-0! h-[23px] bg-[#ece9d8]'
                  : 'h-[21px] border-b bg-linear-to-b from-[#ece9d8] to-[#d6cfa8]'
              )}
            >
              {tab.name}
            </button>
          ))}
          <div className="flex-1 border-b border-[#808080]" />
        </div>

        <Toolbar />
        <div className="flex min-h-0 flex-1 flex-col border-x border-t border-[#808080] border-t-[#aca899]">
          <Chart />
          <ScrollRow />
          <div className="mx-auto flex h-[7px] w-[546px] shrink-0 items-center gap-1 border border-[#aca899] px-1">
            <svg viewBox="0 0 6 3" className="h-[3px] w-[6px]"><path d="M0 0h6L3 3z" fill="#316ac5" /></svg>
            <div className="h-px flex-1 bg-[repeating-linear-gradient(90deg,#316ac5_0_1px,transparent_1px_3px)]" />
            <svg viewBox="0 0 6 3" className="h-[3px] w-[6px]"><path d="M0 0h6L3 3z" fill="#316ac5" /></svg>
          </div>
        </div>
        <BottomPanel />

        {/* Status bar */}
        <footer className="flex h-5 shrink-0 gap-[2px] pt-px pb-px text-[11px] leading-4">
          <div className={clsx('w-[190px] pl-1 whitespace-nowrap', sunken)}>USB Осциллограф не подключен</div>
          <div className={clsx('flex-1', sunken)} />
          <div className={clsx('w-[50px] pl-[2px]', sunken)}>1.8</div>
        </footer>
        <div className="flex h-[3px] shrink-0 bg-[#2f7be4]">
          <div className="w-[94px] rounded-tr-[3px] bg-[#3c963c]" />
          <div className="flex-1 border-t border-[#1c4cc0]" />
          <div className="w-[110px] bg-[#12a8ec]" />
        </div>
      </div>
    </div>
  );
}
